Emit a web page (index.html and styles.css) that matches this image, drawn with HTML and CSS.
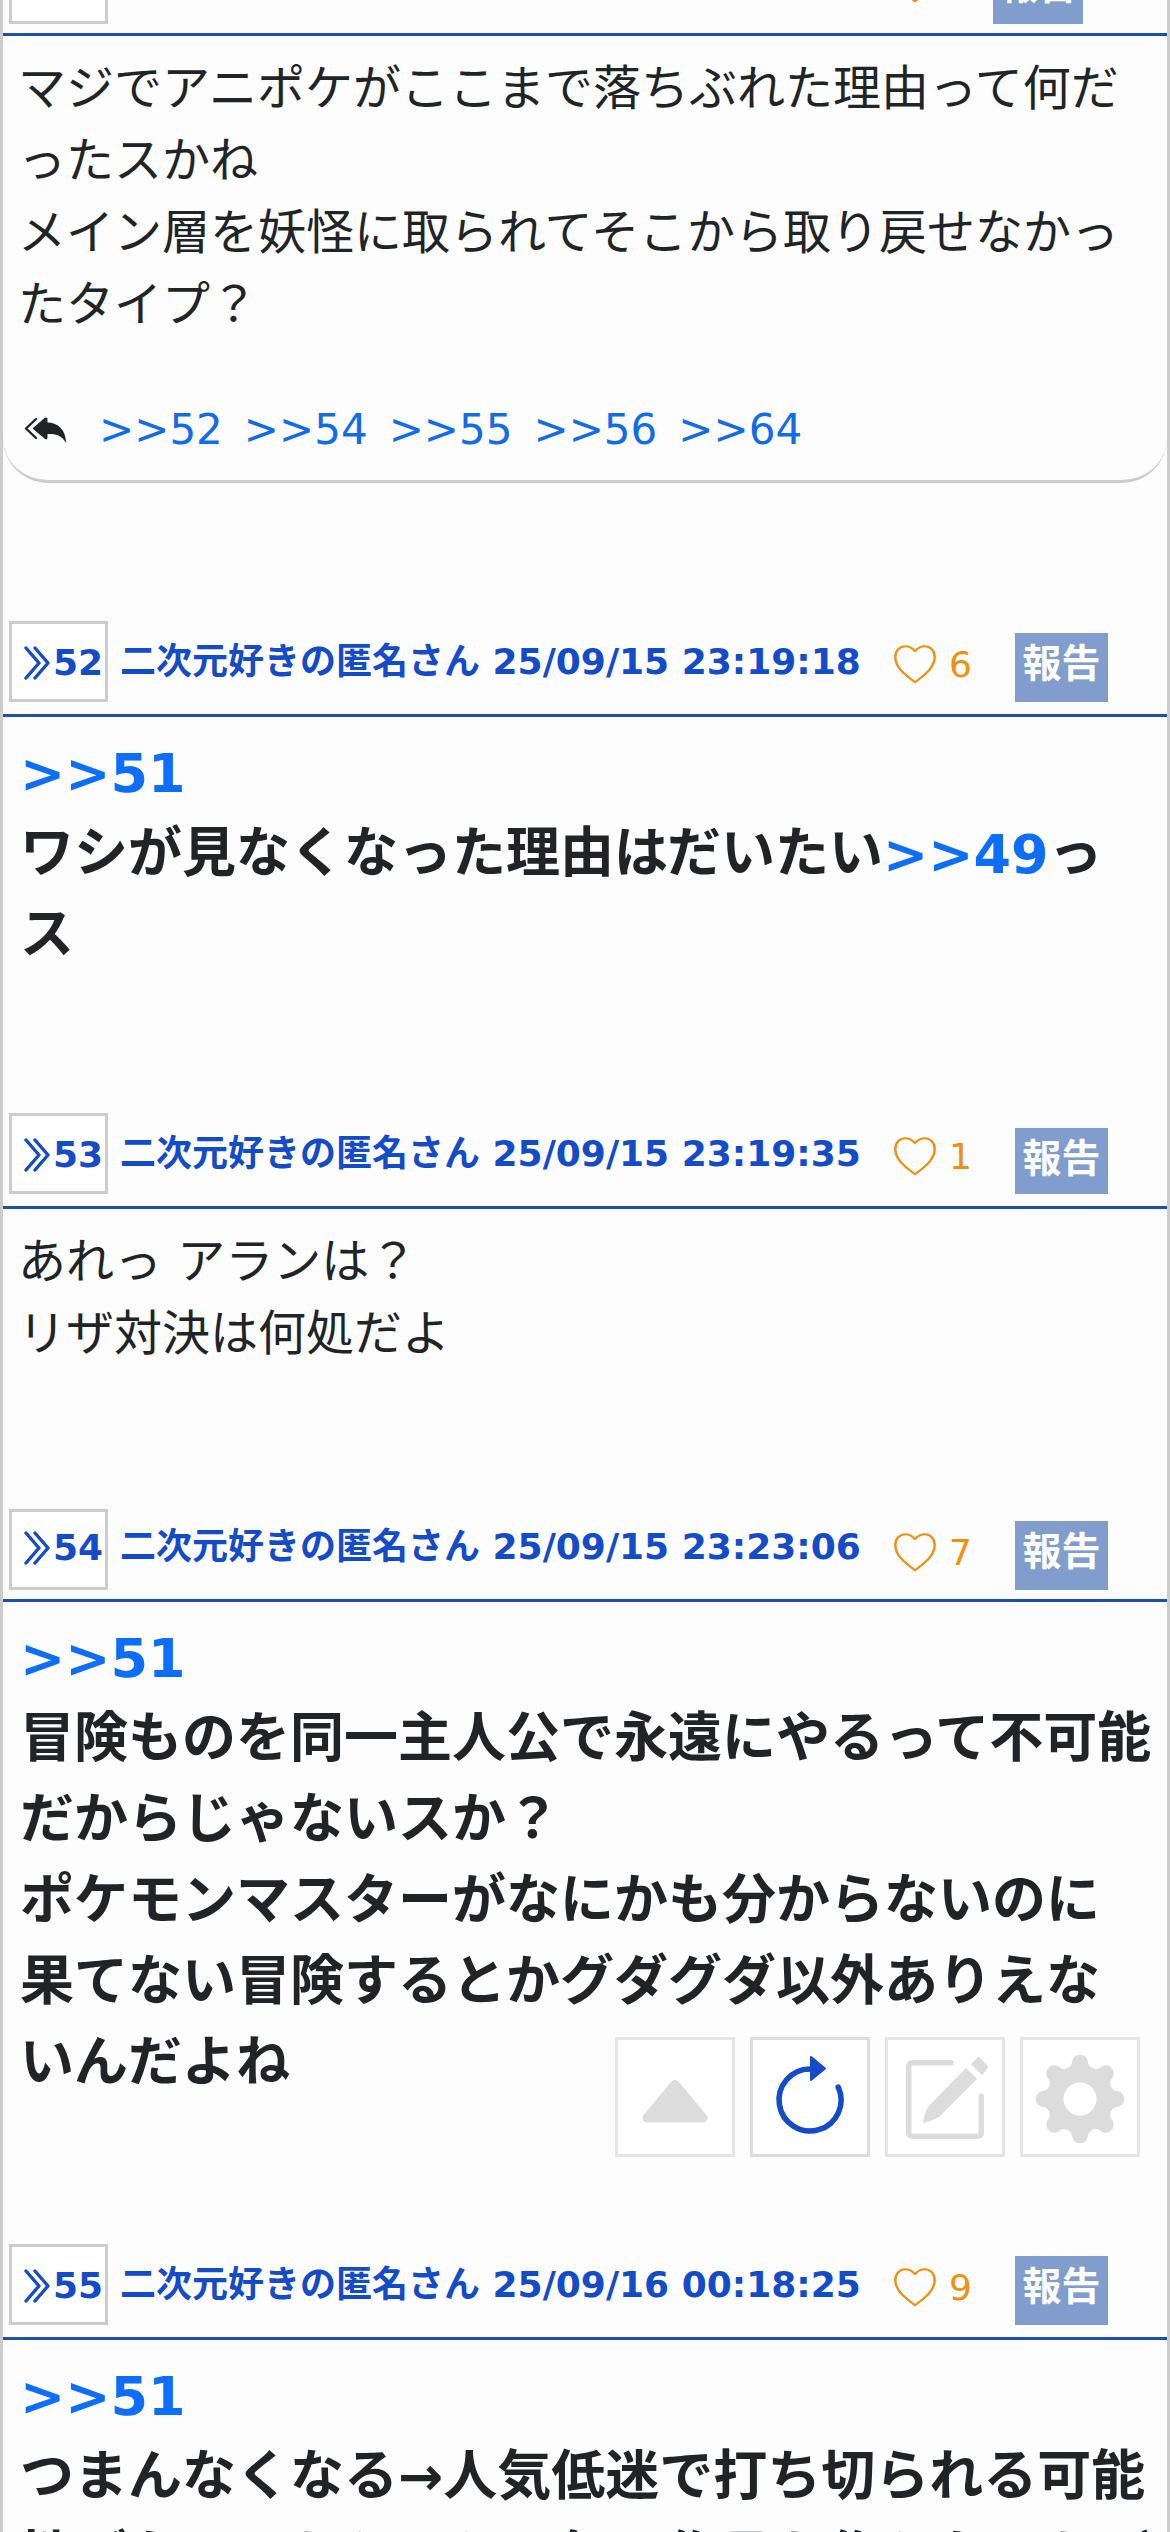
FILE: index.html
```
<!DOCTYPE html>
<html lang="ja">
<head>
<meta charset="utf-8">
<title>スレッド</title>
<link rel="stylesheet" href="styles.css">
</head>
<body>
<svg class="defs" width="0" height="0">
  <symbol id="chev" viewBox="0 0 26 34"><path d="M2 2L15 17L2 32M11 2L24 17L11 32" fill="none" stroke="currentColor" stroke-width="3.400" stroke-linecap="round" stroke-linejoin="round"/></symbol>
  <symbol id="heart" viewBox="0 0 42 45" preserveAspectRatio="none"><path d="M21 7C24.500 2.500 28 1.500 31 1.500C36.500 1.500 40.700 7 40.700 14C40.700 26 31 34 21 43C11 34 1.300 26 1.300 14C1.300 7 5.500 1.500 11 1.500C14 1.500 17.500 2.500 21 7Z" fill="none" stroke="currentColor" stroke-width="2.400" stroke-linejoin="round"/></symbol>
</svg>
<main class="thread">
  <article class="post">
    <header class="head head-cut">
      <a class="num"></a>
      <svg class="heart"><use href="#heart"/></svg>
      <a class="report report-cut">報告</a>
    </header>
    <div class="body first">
      <p>マジでアニポケがここまで落ちぶれた理由って何だ<br>ったスかね<br>メイン層を妖怪に取られてそこから取り戻せなかっ<br>たタイプ？</p>
      <div class="replies">
        <svg class="reply" viewBox="0 0 42 26"><path d="M12 2L2 11.500L12 21" fill="none" stroke="currentColor" stroke-width="2.400" stroke-linecap="round" stroke-linejoin="round"/><path d="M8.500 11.500L20.500 1Q23 -.5 23.500 2V5.500C34 5.500 42 13 42 26C38 18.500 32 16.500 23.500 17V20.500Q23 24 20.500 21.500Z" fill="currentColor"/></svg>
        <a>&gt;&gt;52</a><a>&gt;&gt;54</a><a>&gt;&gt;55</a><a>&gt;&gt;56</a><a>&gt;&gt;64</a>
      </div>
    </div>
  </article>

  <article class="post p52">
    <header class="head">
      <a class="num"><svg><use href="#chev"/></svg>52</a>
      <span class="name">二次元好きの匿名さん 25/09/15 23:19:18</span>
      <svg class="heart"><use href="#heart"/></svg><span class="count">6</span>
      <a class="report">報告</a>
    </header>
    <div class="body big"><p><a>&gt;&gt;51</a><br>ワシが見なくなった理由はだいたい<a>&gt;&gt;49</a>っ<br>ス</p></div>
  </article>

  <article class="post p53">
    <header class="head">
      <a class="num"><svg><use href="#chev"/></svg>53</a>
      <span class="name">二次元好きの匿名さん 25/09/15 23:19:35</span>
      <svg class="heart"><use href="#heart"/></svg><span class="count">1</span>
      <a class="report short">報告</a>
    </header>
    <div class="body"><p>あれっ アランは？<br>リザ対決は何処だよ</p></div>
  </article>

  <article class="post p54">
    <header class="head tight">
      <a class="num"><svg><use href="#chev"/></svg>54</a>
      <span class="name">二次元好きの匿名さん 25/09/15 23:23:06</span>
      <svg class="heart"><use href="#heart"/></svg><span class="count">7</span>
      <a class="report">報告</a>
    </header>
    <div class="body big"><p><a>&gt;&gt;51</a><br>冒険ものを同一主人公で永遠にやるって不可能<br>だからじゃないスか？<br>ポケモンマスターがなにかも分からないのに<br>果てない冒険するとかグダグダ以外ありえな<br>いんだよね</p></div>
  </article>

  <article class="post p55">
    <header class="head">
      <a class="num"><svg><use href="#chev"/></svg>55</a>
      <span class="name">二次元好きの匿名さん 25/09/16 00:18:25</span>
      <svg class="heart"><use href="#heart"/></svg><span class="count">9</span>
      <a class="report">報告</a>
    </header>
    <div class="body big"><p><a>&gt;&gt;51</a><br>つまんなくなる→人気低迷で打ち切られる可能<br>性がなってたらとか百年の作品も作らないたど</p></div>
  </article>
</main>

<nav class="tools">
  <a class="tool"><svg viewBox="0 0 120 120"><path d="M60 47.500L32 81H88Z" fill="#dcdcdc" stroke="#dcdcdc" stroke-width="9" stroke-linejoin="round"/></svg></a>
  <a class="tool active"><svg viewBox="0 0 120 120"><path d="M60 32A31 31 0 1 0 88.200 50" fill="none" stroke="#144bc8" stroke-width="5.500" stroke-linecap="round"/><path d="M61 20L75 31.500L61 43Z" fill="#144bc8" stroke="#144bc8" stroke-width="2" stroke-linejoin="round"/></svg></a>
  <a class="tool"><svg viewBox="0 0 120 120"><path d="M66 25.700H28Q23.700 25.700 23.700 30V95Q23.700 99.300 28 99.300H92Q96.300 99.300 96.300 95V59" fill="none" stroke="#dcdcdc" stroke-width="5.400" stroke-linecap="round"/><path d="M81 31L92 42L55 79Q52 82 39 86Q37.500 86 38 84Q40 75 43 70Z" fill="#dcdcdc"/><path d="M93.500 21.500L101.500 30L97 36L88 27Z" fill="#dcdcdc" stroke="#dcdcdc" stroke-width="3" stroke-linejoin="round"/></svg></a>
  <a class="tool"><svg viewBox="0 0 120 120"><g transform="translate(60 62)" fill="#dcdcdc"><circle r="24.500" fill="none" stroke="#dcdcdc" stroke-width="16"/>
    <path id="tooth" d="M-12.800 -31C-8 -33 -8.300 -35 -8 -37.500A8.100 8.100 0 0 1 8 -37.500C8.300 -35 8 -33 12.800 -31L6 -20H-6Z"/>
    <use href="#tooth" transform="rotate(45)"/><use href="#tooth" transform="rotate(90)"/><use href="#tooth" transform="rotate(135)"/><use href="#tooth" transform="rotate(180)"/><use href="#tooth" transform="rotate(225)"/><use href="#tooth" transform="rotate(270)"/><use href="#tooth" transform="rotate(315)"/></g></svg></a>
</nav>
</body>
</html>
```
FILE: styles.css
```
* { box-sizing: border-box; }
body {
  margin: 0;
  background: #fdfdfd;
  color: #212427;
  font-family: "DejaVu Sans", "Noto Sans CJK JP", sans-serif;
}
p { margin: 0; }
.defs { position: absolute; }
.thread {
  height: 2532px;
  overflow: hidden;
  border: solid #ccc;
  border-width: 0 3px;
}
.p52 { margin-top: 138px; }
.head {
  display: flex;
  align-items: flex-end;
  height: 96px;
  padding: 0 0 12px 6px;
  border-bottom: 3px solid #1f4fac;
  color: #144bc8;
  white-space: nowrap;
}
.head.tight { height: 93px; padding-bottom: 9px; }
.tight .name { line-height: 86px; }
.head-cut { height: 36px; padding-bottom: 9px; overflow: hidden; }
.num {
  display: flex;
  align-items: center;
  flex: none;
  width: 99px;
  height: 81px;
  padding: 2px 0 0 12px;
  border: 3px solid #ccc;
  background: #fff;
  font: bold 36px/54px "DejaVu Sans", sans-serif;
}
.tight .num { padding: 0 0 3px 12px; }
.num svg { width: 26px; height: 34px; margin-right: 3px; }
.name {
  flex: none;
  width: 773px;
  margin-left: 12px;
  font-size: 36px;
  font-weight: bold;
  line-height: 81px;
}
.heart { flex: none; width: 42px; height: 39px; margin: 0 13px 18px 1px; color: #ee9010; }
.count { width: 66px; color: #ee9010; font-size: 36px; line-height: 74px; }
.report {
  flex: none;
  height: 69px;
  padding: 0 7.5px;
  background: #809dcd;
  color: #fff;
  font-size: 39px;
  font-weight: bold;
  line-height: 62px;
}
.report.short { height: 66px; line-height: 62px; }
.head-cut .heart { margin: 0 57px 21px 786px; }
.report-cut { width: 90px; padding: 0 6px; }
.body {
  padding: 16px 0 0 15px;
  font-size: 48px;
  line-height: 72px;
  white-space: nowrap;
}
.body a { color: #0d6efd; }
.body.big {
  padding: 15px 0 0 17px;
  font-size: 54px;
  font-weight: bold;
  line-height: 81px;
}
.body.big a { position: relative; top: 1px; }
.first { height: 447px; border-bottom: 3px solid #ccc; border-radius: 0 0 45px 45px; }
.replies {
  display: flex;
  align-items: center;
  gap: 21px;
  margin-top: 54px;
  padding-left: 6px;
  font-size: 42px;
  line-height: 72px;
}
.replies a { color: #126be8; }
.reply { width: 42px; height: 26px; margin-right: 12px; }
.p52 .body { height: 396px; }
.p53 .body { height: 300px; }
.p54 .body { height: 642px; }
.tools {
  position: fixed;
  right: 30px;
  top: 2037px;
  display: flex;
  gap: 15px;
}
.tool { width: 120px; height: 120px; border: 3px solid #e5e5e5; background: #fff; }
.tool.active { border-color: #dcdcdc; }
.tool svg { display: block; width: 120px; height: 120px; margin: -3px; }
```
